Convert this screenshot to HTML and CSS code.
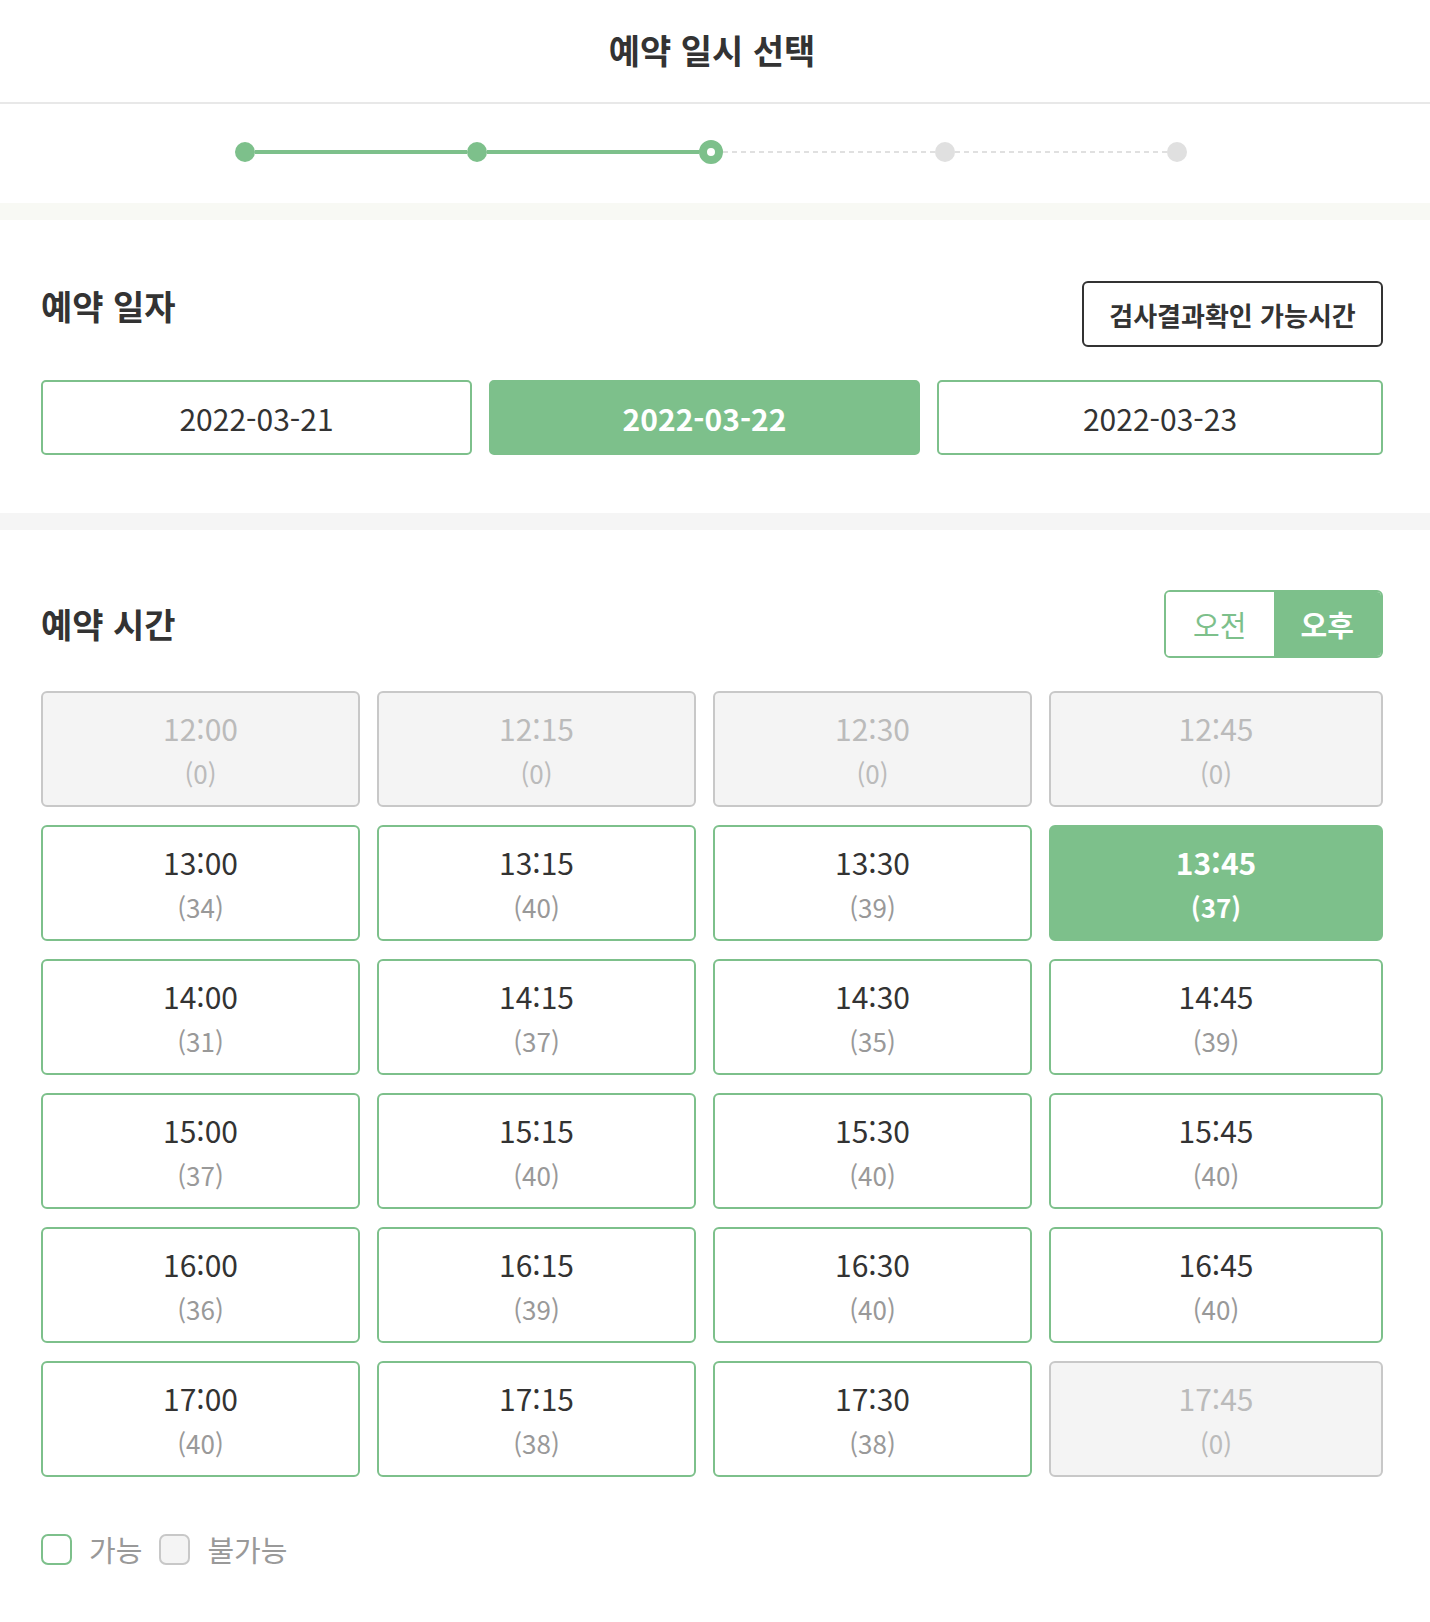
FILE: index.html
```html
<!DOCTYPE html>
<html lang="ko">
<head>
    <meta charset="UTF-8">
    <meta name="viewport" content="width=device-width, initial-scale=1.0">
    <title>예약 일시 선택</title>
    <link rel="stylesheet" href="styles.css">
</head>
<body>

    <div class="header">
        <h1>예약 일시 선택</h1>
    </div>

    <div class="pasos">
        <div class="paso hecho"></div>
        <div class="linea hecha"></div>
        <div class="paso hecho"></div>
        <div class="linea hecha"></div>
        <div class="paso actual"></div>
        <div class="linea"></div>
        <div class="paso"></div>
        <div class="linea"></div>
        <div class="paso"></div>
    </div>

    <div class="separador"></div>

    <div class="seccion seccion-fecha">
        <div class="seccion-titulo">
            <h2>예약 일자</h2>
            <button class="boton-resultado">검사결과확인 가능시간</button>
        </div>
        <div class="fechas">
            <button class="fecha">2022-03-21</button>
            <button class="fecha activa">2022-03-22</button>
            <button class="fecha">2022-03-23</button>
        </div>
    </div>

    <div class="separador gris"></div>

    <div class="seccion seccion-hora">
        <div class="seccion-titulo">
            <h2>예약 시간</h2>
            <div class="ampm">
                <button class="ampm-btn">오전</button>
                <button class="ampm-btn activo">오후</button>
            </div>
        </div>
        <div class="horas">
            <div class="hora cerrada"><span class="hh">12:00</span><span class="cupo">(0)</span></div>
            <div class="hora cerrada"><span class="hh">12:15</span><span class="cupo">(0)</span></div>
            <div class="hora cerrada"><span class="hh">12:30</span><span class="cupo">(0)</span></div>
            <div class="hora cerrada"><span class="hh">12:45</span><span class="cupo">(0)</span></div>

            <div class="hora"><span class="hh">13:00</span><span class="cupo">(34)</span></div>
            <div class="hora"><span class="hh">13:15</span><span class="cupo">(40)</span></div>
            <div class="hora"><span class="hh">13:30</span><span class="cupo">(39)</span></div>
            <div class="hora elegida"><span class="hh">13:45</span><span class="cupo">(37)</span></div>

            <div class="hora"><span class="hh">14:00</span><span class="cupo">(31)</span></div>
            <div class="hora"><span class="hh">14:15</span><span class="cupo">(37)</span></div>
            <div class="hora"><span class="hh">14:30</span><span class="cupo">(35)</span></div>
            <div class="hora"><span class="hh">14:45</span><span class="cupo">(39)</span></div>

            <div class="hora"><span class="hh">15:00</span><span class="cupo">(37)</span></div>
            <div class="hora"><span class="hh">15:15</span><span class="cupo">(40)</span></div>
            <div class="hora"><span class="hh">15:30</span><span class="cupo">(40)</span></div>
            <div class="hora"><span class="hh">15:45</span><span class="cupo">(40)</span></div>

            <div class="hora"><span class="hh">16:00</span><span class="cupo">(36)</span></div>
            <div class="hora"><span class="hh">16:15</span><span class="cupo">(39)</span></div>
            <div class="hora"><span class="hh">16:30</span><span class="cupo">(40)</span></div>
            <div class="hora"><span class="hh">16:45</span><span class="cupo">(40)</span></div>

            <div class="hora"><span class="hh">17:00</span><span class="cupo">(40)</span></div>
            <div class="hora"><span class="hh">17:15</span><span class="cupo">(38)</span></div>
            <div class="hora"><span class="hh">17:30</span><span class="cupo">(38)</span></div>
            <div class="hora cerrada"><span class="hh">17:45</span><span class="cupo">(0)</span></div>
        </div>

        <div class="leyenda">
            <span class="caja"></span>
            <span class="texto">가능</span>
            <span class="caja gris"></span>
            <span class="texto">불가능</span>
        </div>
    </div>

</body>
</html>
```

FILE: styles.css
```css
body {
    margin: 0;
    padding: 0;
    background: #fff;
    font-family: "Noto Sans CJK KR", "Noto Sans", sans-serif;
    color: #333;
}
button {
    font-family: inherit;
    cursor: pointer;
}
.header {
    height: 98px;
    padding: 0 47px 4px 41px;
    border-bottom: 2px solid #e8e8e8;
    display: flex;
    justify-content: center;
    align-items: center;
}
h1 {
    margin: 0;
    font-size: 34px;
    font-weight: bold;
    color: #333;
}
.pasos {
    width: 952px;
    height: 95px;
    padding-bottom: 4px;
    margin: 0 auto;
    padding-right: 8px;
    display: flex;
    align-items: center;
}
.paso {
    width: 20px;
    height: 20px;
    border-radius: 50%;
    background-color: #e0e0e0;
    flex-shrink: 0;
}
.paso.hecho {
    background-color: #7dc08b;
}
.paso.actual {
    width: 8px;
    height: 8px;
    border: 8px solid #7dc08b;
    background-color: #fff;
}
.linea {
    flex: 1;
    height: 2px;
    background: repeating-linear-gradient(to right, #e0e0e0 0 5px, transparent 5px 9px);
}
.linea.hecha {
    height: 4px;
    background: #7dc08b;
}
.separador {
    height: 17px;
    background-color: #f8f9f4;
}
.separador.gris {
    background-color: #f5f5f5;
}
.seccion {
    padding: 61px 47px 58px 41px;
}
.seccion-hora {
    padding-top: 60px;
}
.seccion-titulo {
    display: flex;
    justify-content: space-between;
    align-items: center;
    margin-bottom: 33px;
}
.seccion-fecha .seccion-titulo {
    align-items: flex-start;
}
h2 {
    margin: 0;
    font-size: 34px;
    line-height: 50px;
    font-weight: bold;
    color: #333;
}
.boton-resultado {
    width: 301px;
    height: 66px;
    background: #fff;
    border: 2px solid #333;
    border-radius: 6px;
    font-size: 26px;
    font-weight: bold;
    color: #333;
}
.fechas {
    display: grid;
    grid-template-columns: 431px 431px 1fr;
    gap: 17px;
}
.fecha {
    height: 75px;
    background: #fff;
    border: 2px solid #7dc08b;
    border-radius: 5px;
    font-size: 30px;
    color: #333;
}
.fecha.activa {
    background-color: #7dc08b;
    color: #fff;
    font-weight: bold;
}
.ampm {
    display: flex;
    width: 219px;
    height: 68px;
    border: 2px solid #7dc08b;
    border-radius: 6px;
    overflow: hidden;
    box-sizing: border-box;
}
.ampm-btn {
    flex: 1;
    border: none;
    background: #fff;
    color: #7dc08b;
    font-size: 29px;
}
.ampm-btn.activo {
    background-color: #7dc08b;
    color: #fff;
    font-weight: bold;
}
.horas {
    display: grid;
    grid-template-columns: 319px 319px 319px 1fr;
    gap: 18px 17px;
}
.hora {
    height: 116px;
    box-sizing: border-box;
    padding-top: 14px;
    border: 2px solid #7dc08b;
    border-radius: 6px;
    display: flex;
    flex-direction: column;
    align-items: center;
    background: #fff;
}
.hh {
    font-size: 30px;
    line-height: 42px;
    color: #333;
}
.cupo {
    font-size: 26px;
    line-height: 42px;
    padding-top: 3px;
    color: #999;
}
.hora.cerrada {
    background-color: #f4f4f4;
    border-color: #c8c8c8;
}
.hora.cerrada .hh,
.hora.cerrada .cupo {
    color: #bbb;
}
.hora.elegida {
    background-color: #7dc08b;
}
.hora.elegida .hh,
.hora.elegida .cupo {
    color: #fff;
    font-weight: bold;
}
.leyenda {
    display: flex;
    align-items: center;
    margin-top: 51px;
}
.caja {
    width: 31px;
    height: 31px;
    box-sizing: border-box;
    border: 2px solid #7dc08b;
    border-radius: 7px;
    margin-right: 17px;
}
.caja.gris {
    border-color: #c8c8c8;
    background-color: #f4f4f4;
}
.texto {
    font-size: 29px;
    color: #999;
    margin-right: 17px;
}
```
